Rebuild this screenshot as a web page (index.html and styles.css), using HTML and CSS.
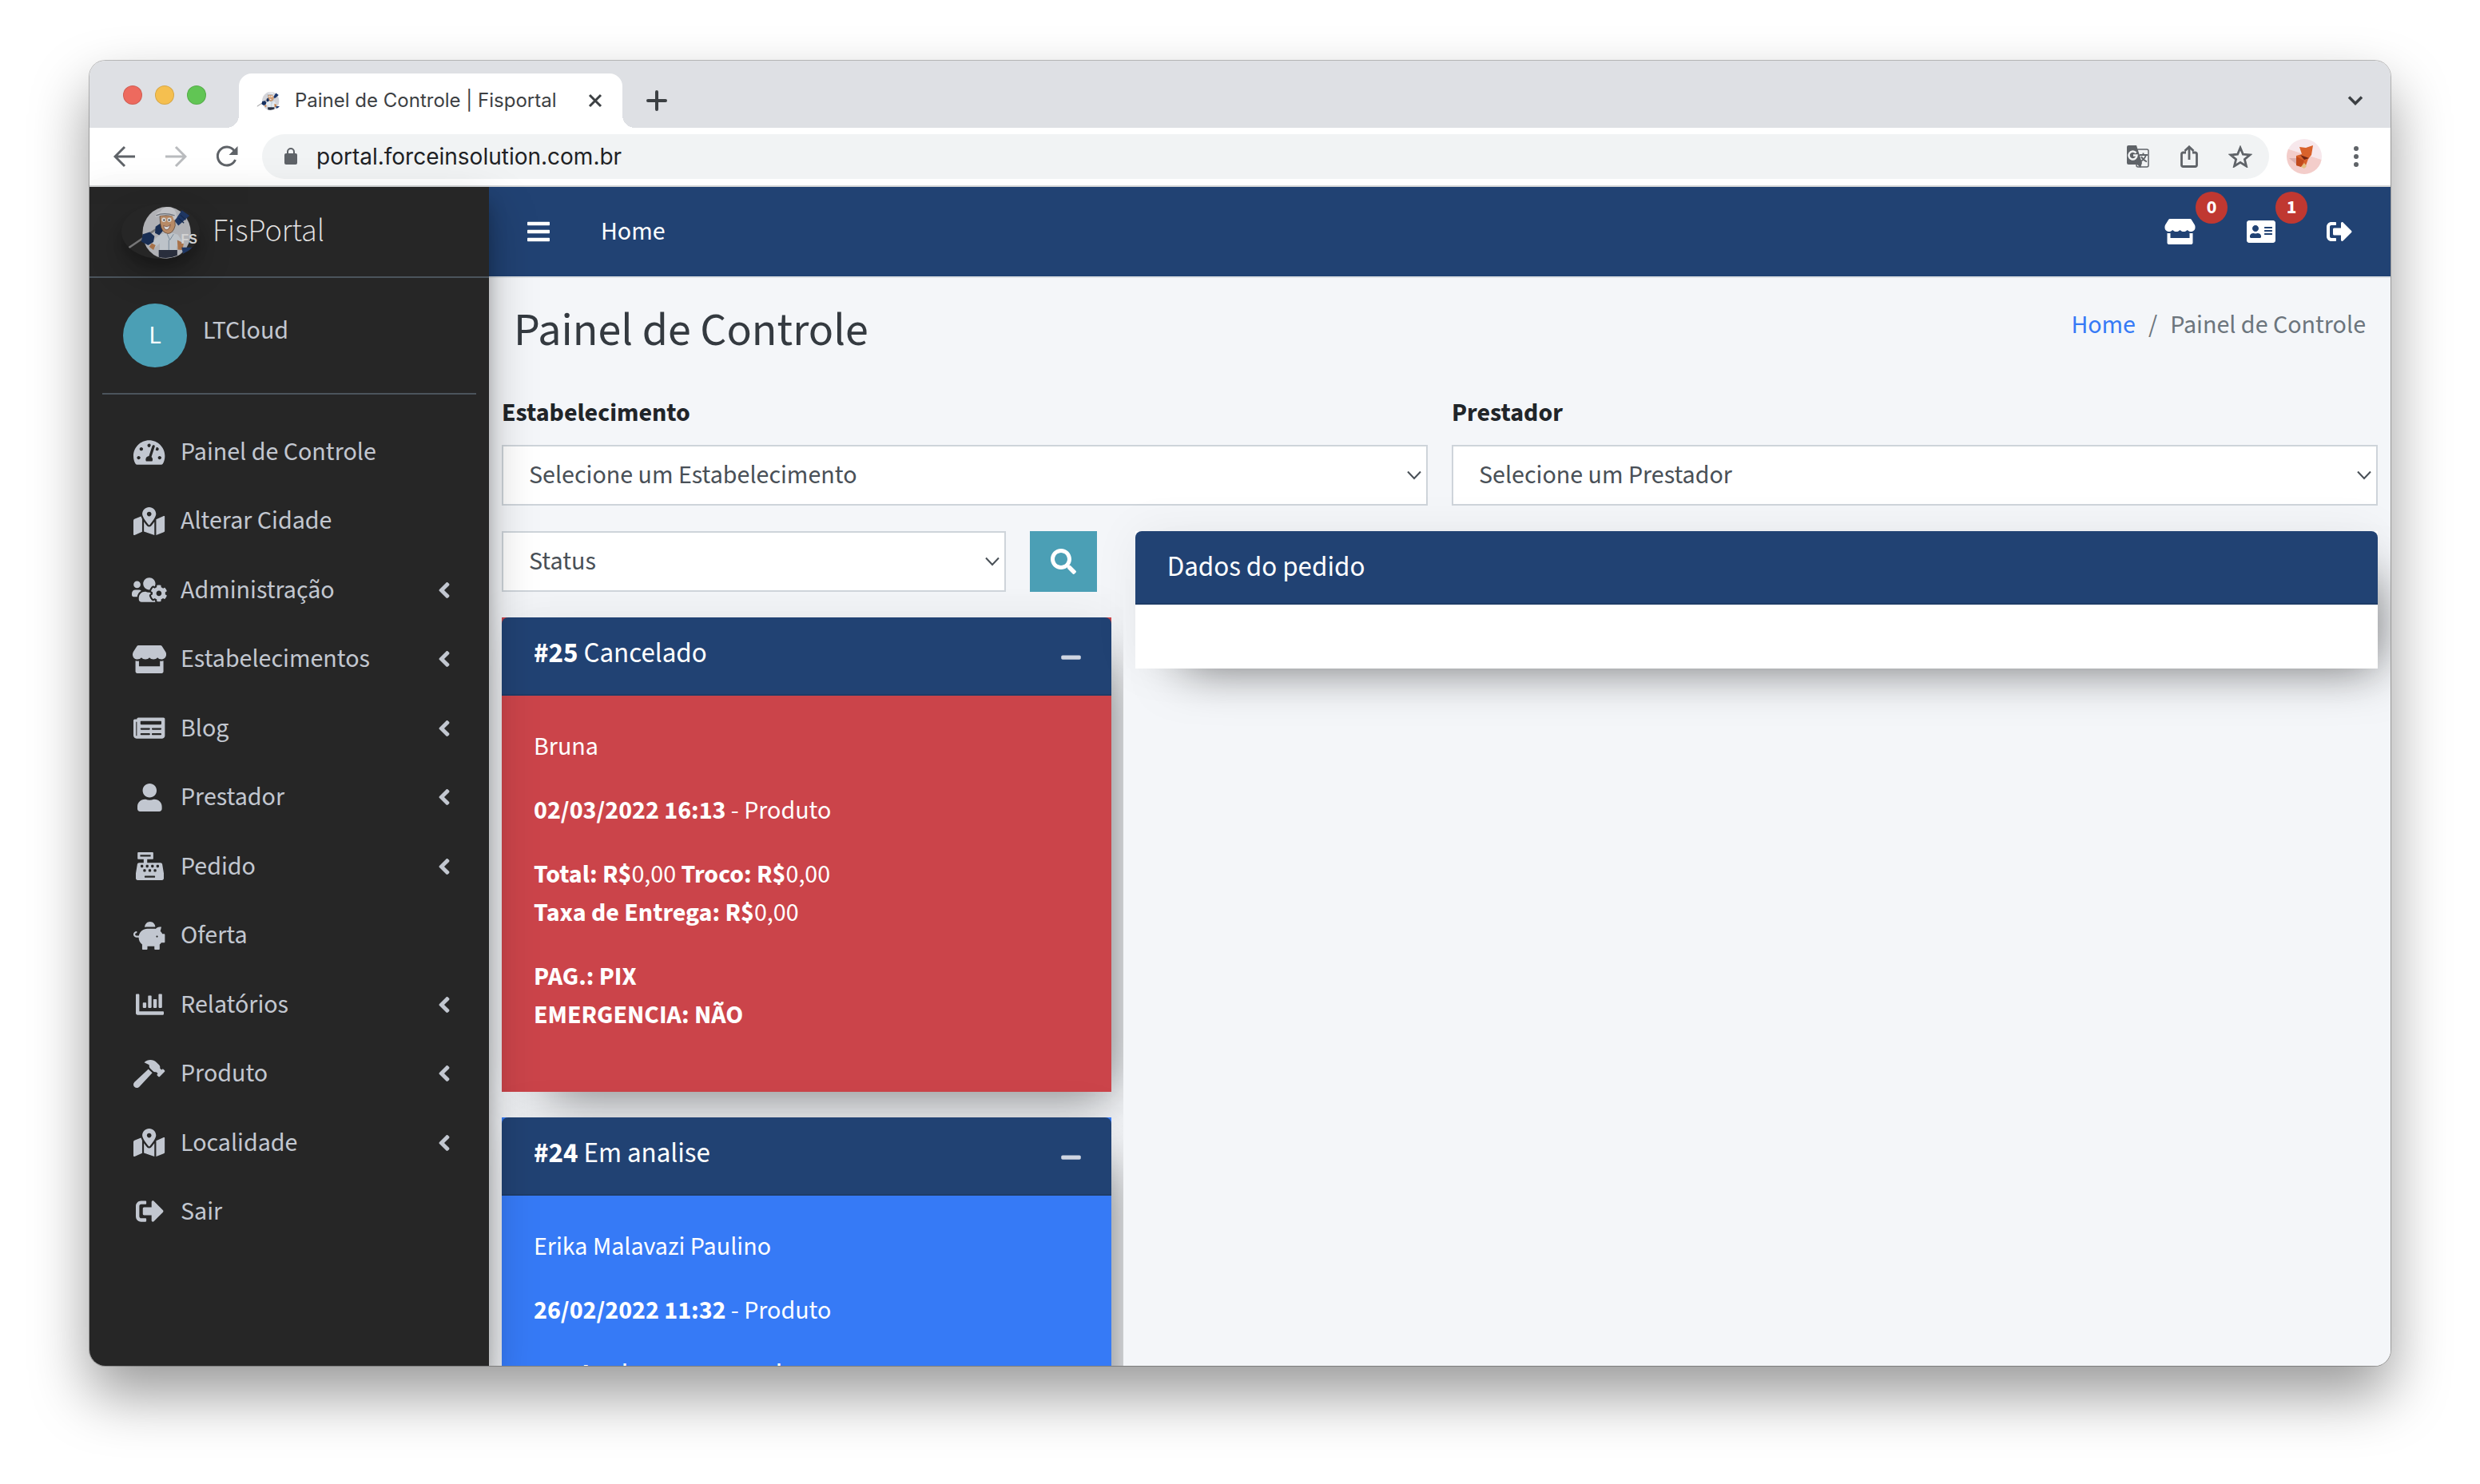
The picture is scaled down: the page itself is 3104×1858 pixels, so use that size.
FILE: index.html
```
<!DOCTYPE html>
<html lang="pt-BR">
<head>
<meta charset="utf-8">
<title>Painel de Controle | Fisportal</title>
<link rel="stylesheet" href="styles.css">
</head>
<body>
<svg class="sprite" aria-hidden="true">
  <symbol id="mascot" viewBox="0 0 290 205">
    <ellipse cx="168" cy="107" rx="91" ry="98" fill="#d3d4d9"/>
    <path d="M27 162L130 92" stroke="#8a8a8c" stroke-width="8" stroke-linecap="round"/>
    <path d="M198 62L225 22L254 42L212 80Z" fill="#1d3a72"/>
    <path d="M213 52l20 18M220 40l20 18" stroke="#122a56" stroke-width="4"/>
    <path d="M126 84l20-14 14 22-20 24-16-8z" fill="#16305f"/>
    <path d="M144 114q30-14 66 0l22 34-20 20-6-12v30h-64v-40l-20 18-12-22z" fill="#e3ebf2"/>
    <path d="M170 112l10 22 14-22M176 134v44" stroke="#8ba0b3" stroke-width="3" fill="none"/>
    <path d="M78 112l26-8 18 16-4 22-20 12-26-14z" fill="#16305f"/>
    <path d="M112 146l14 8-8 18-16-12zM208 134l24 12-4 26-18-2z" fill="#c98652"/>
    <path d="M138 172h70v20q-34 16-70 6z" fill="#2a3142"/>
    <path d="M224 162h40q-10 18-34 26z" fill="#1d3a72"/>
    <path d="M142 42h56l2 38q-8 30-28 30-24-4-28-38z" fill="#dca477" stroke="#5a3a24" stroke-width="2"/>
    <circle cx="157" cy="58" r="8" fill="#fff"/><circle cx="178" cy="58" r="8" fill="#fff"/>
    <circle cx="158" cy="59" r="3" fill="#222"/><circle cx="177" cy="59" r="3" fill="#222"/>
    <path d="M156 80q16 8 26-4-4 20-16 20-10-4-10-16z" fill="#fff" stroke="#7a3d28" stroke-width="2"/>
    <path d="M124 44q4-12 20-16 8-20 32-18 28 2 30 40l-10 10-6-16q-28-12-62 4z" fill="#e8eaee"/>
    <path d="M128 42q30-14 70 0" stroke="#80858e" stroke-width="4" fill="none"/>
  </symbol>
  <symbol id="angle" viewBox="0 0 256 512"><path d="M31.7 239l136-136c9.4-9.4 24.6-9.4 33.9 0l22.6 22.6c9.4 9.4 9.4 24.6 0 33.9L127.9 256l96.4 96.4c9.4 9.4 9.4 24.6 0 33.9L201.7 409c-9.4 9.4-24.6 9.4-33.9 0l-136-136c-9.5-9.4-9.5-24.6-.1-34z"/></symbol>
  <symbol id="map" viewBox="0 0 576 512"><path d="M288 0c-69.59 0-126 56.41-126 126 0 56.26 82.35 158.8 113.9 196.02 6.39 7.54 17.82 7.54 24.2 0C331.65 284.8 414 182.26 414 126 414 56.41 357.59 0 288 0zm0 168c-23.2 0-42-18.8-42-42s18.8-42 42-42 42 18.8 42 42-18.8 42-42 42zM20.12 215.95A32.006 32.006 0 0 0 0 245.66v250.32c0 11.32 11.43 19.06 21.94 14.86L160 448V214.92c-8.84-15.98-16.07-31.54-21.25-46.42L20.12 215.95zM288 359.67c-14.07 0-27.38-6.18-36.51-16.96-19.66-23.2-40.57-49.62-59.49-76.72v182l192 64V266c-18.92 27.09-39.82 53.52-59.49 76.72-9.13 10.77-22.44 16.95-36.51 16.95zm266.06-198.51L416 224v288l139.88-55.95A31.996 31.996 0 0 0 576 426.34V176.02c0-11.32-11.43-19.06-21.94-14.86z"/></symbol>
  <symbol id="store" viewBox="0 0 616 512"><path d="M602 118.6L537.1 15C531.3 5.7 521 0 510 0H106C95 0 84.7 5.7 78.9 15L14 118.6c-33.5 53.5-3.8 127.9 58.8 136.4 4.5.6 9.1.9 13.7.9 29.6 0 55.8-13 73.8-33.1 18 20.1 44.3 33.1 73.8 33.1 29.6 0 55.8-13 73.8-33.1 18 20.1 44.3 33.1 73.8 33.1 29.6 0 55.8-13 73.8-33.1 18.1 20.1 44.3 33.1 73.8 33.1 4.7 0 9.2-.3 13.7-.9 62.8-8.4 92.6-82.8 59-136.4zM529.5 288c-10 0-19.9-1.5-29.5-3.8V384H116v-99.8c-9.6 2.2-19.5 3.8-29.5 3.8-6 0-12.1-.4-18-1.2-5.6-.8-11.1-2.1-16.4-3.6V480c0 17.7 14.3 32 32 32h448c17.7 0 32-14.3 32-32V283.2c-5.4 1.6-10.8 2.9-16.4 3.6-6.1.8-12.1 1.2-18.2 1.2z"/></symbol>
  <symbol id="exit" viewBox="0 0 512 512"><path d="M497 273L329 441c-15 15-41 4.5-41-17v-96H152c-13.3 0-24-10.7-24-24v-96c0-13.3 10.7-24 24-24h136V88c0-21.4 25.9-32 41-17l168 168c9.3 9.4 9.3 24.6 0 34zM192 436v-40c0-6.6-5.4-12-12-12H96c-17.7 0-32-14.3-32-32V160c0-17.7 14.3-32 32-32h84c6.6 0 12-5.4 12-12V76c0-6.6-5.4-12-12-12H96c-53 0-96 43-96 96v192c0 53 43 96 96 96h84c6.6 0 12-5.4 12-12z"/></symbol>
  <symbol id="minus" viewBox="0 0 448 512"><path d="M416 208H32c-17.67 0-32 14.33-32 32v32c0 17.67 14.33 32 32 32h384c17.67 0 32-14.33 32-32v-32c0-17.67-14.33-32-32-32z"/></symbol>
  <symbol id="caret" viewBox="0 0 18 12"><path d="M1 1.5L9 10L17 1.5" fill="none" stroke="#495057" stroke-width="2"/></symbol>
</svg>

<div class="window">
  <header class="tabbar">
    <div class="lights"><span class="light close"></span><span class="light min"></span><span class="light max"></span></div>
    <div class="tab">
      <svg class="favicon" viewBox="0 0 290 205"><use href="#mascot" width="290" height="205"/></svg>
      <span class="tab-title">Painel de Controle | Fisportal</span>
      <button class="tab-close" aria-label="Fechar guia"><svg width="20" height="20" viewBox="0 0 20 20"><path d="M3 3L17 17M17 3L3 17" stroke="#3c4043" stroke-width="3"/></svg></button>
    </div>
    <button class="new-tab" aria-label="Nova guia"><svg width="26" height="26" viewBox="0 0 26 26"><path d="M13 2V24M2 13H24" stroke="#3c4043" stroke-width="4" stroke-linecap="round"/></svg></button>
    <button class="tab-search" aria-label="Pesquisar guias"><svg width="20" height="14" viewBox="0 0 20 14"><path d="M2 2.500L10 10.500L18 2.500" fill="none" stroke="#3c4043" stroke-width="3.500"/></svg></button>
  </header>

  <div class="toolbar">
    <button class="tool" aria-label="Voltar"><svg width="28" height="28" viewBox="0 0 28 28"><path d="M27 14H3M14 2L2 14L14 26" fill="none" stroke="#5f6368" stroke-width="3"/></svg></button>
    <button class="tool" aria-label="Avançar"><svg width="28" height="28" viewBox="0 0 28 28"><path d="M1 14H25M14 2L26 14L14 26" fill="none" stroke="#b9bbbe" stroke-width="3"/></svg></button>
    <button class="tool" aria-label="Recarregar"><svg width="28" height="28" viewBox="0 0 28 28"><path d="M24.500 18A11.500 11.500 0 1 1 23 6.500" fill="none" stroke="#5f6368" stroke-width="3"/><path d="M27.500 1V12H16.500Z" fill="#5f6368"/></svg></button>
    <div class="omnibox">
      <svg class="lock" width="16" height="22" viewBox="0 0 16 22"><rect x="0" y="7" width="16" height="14" rx="2" fill="#5f6368"/><path d="M4 8V5a4 4 0 0 1 8 0V8" fill="none" stroke="#5f6368" stroke-width="2"/></svg>
      <input class="url" type="text" aria-label="Endereço" value="portal.forceinsolution.com.br">
      <button class="tool" aria-label="Traduzir"><svg width="28" height="28" viewBox="0 0 28 28"><rect x="12" y="5" width="15" height="22" rx="2" fill="none" stroke="#5f6368" stroke-width="1.500"/><path d="M2 0H12L19 22L17 28L13 24H2Q0 24 0 22V2Q0 0 2 0Z" fill="#5f6368"/><path d="M11.500 9.500A5 5 0 1 0 12.500 12.500H8" fill="none" stroke="#f1f3f4" stroke-width="2.500"/><path d="M16 12H26M20.500 9.500V12M24 12Q22.500 17 17 20.500M18 14Q20 18 25 20.500" fill="none" stroke="#5f6368" stroke-width="1.800"/></svg></button>
      <button class="tool" aria-label="Compartilhar"><svg width="22" height="28" viewBox="0 0 22 28"><path d="M7 9H3.500Q1.500 9 1.500 11V24.500Q1.500 26.500 3.500 26.500H18.500Q20.500 26.500 20.500 24.500V11Q20.500 9 18.500 9H15M11 18V2M5.500 7L11 1.800L16.500 7" fill="none" stroke="#5f6368" stroke-width="2.800"/></svg></button>
      <button class="tool" aria-label="Adicionar aos favoritos"><svg width="30" height="28" viewBox="0 0 30 28"><path d="M15 3L18.400 11.200L27 11.900L20.400 17.500L22.500 26L15 21.400L7.500 26L9.600 17.500L3 11.900L11.600 11.200Z" fill="none" stroke="#5f6368" stroke-width="2.800"/></svg></button>
    </div>
    <button class="profile" aria-label="Perfil"><svg width="44" height="44" viewBox="0 0 44 44"><path d="M0 0H44V26L0 12Z" fill="#f7e8ec"/><path d="M0 12L44 26V44H0Z" fill="#f3cdca"/><path d="M3 24L14 24L16 35Z" fill="#dcb0ae"/><path d="M16 10L24 11L33 8L31 20L27 25L23 36L12 33L12 21L19 19Z" fill="#d9622b"/><path d="M17 20L28 24L22 26Z" fill="#6f2413"/><path d="M12 22L22 27L18 35L12 33Z" fill="#c24a1c"/><path d="M18 35L22 30L25 34L22 37Z" fill="#e3c083"/></svg></button>
    <button class="kebab" aria-label="Mais"><svg width="8" height="28" viewBox="0 0 8 28"><circle cx="4" cy="4" r="3" fill="#5f6368"/><circle cx="4" cy="14" r="3" fill="#5f6368"/><circle cx="4" cy="24" r="3" fill="#5f6368"/></svg></button>
  </div>

  <div class="page">
    <aside class="sidebar">
      <a class="brand" href="#"><svg class="logo" viewBox="0 0 290 205"><use href="#mascot"/><text x="222" y="148" class="mascot-text">FS</text></svg><span>FisPortal</span></a>
      <div class="user"><span class="avatar">L</span><a class="user-name" href="#">LTCloud</a></div>
      <nav class="menu">
        <a href="#"><span class="ico"><svg viewBox="0 0 576 512"><path d="M288 32C128.940 32 0 160.940 0 320c0 52.800 14.250 102.260 39.060 144.800 5.610 9.620 16.300 15.200 27.440 15.200h443c11.140 0 21.830-5.580 27.440-15.200C561.750 422.260 576 372.800 576 320c0-159.060-128.940-288-288-288zm0 64c14.710 0 26.580 10.130 30.320 23.650-1.110 2.260-2.640 4.230-3.450 6.670l-9.220 27.670c-5.130 3.490-10.970 6.010-17.640 6.010-17.670 0-32-14.330-32-32S270.330 96 288 96zM96 384c-17.670 0-32-14.330-32-32s14.330-32 32-32 32 14.330 32 32-14.330 32-32 32zm48-160c-17.670 0-32-14.330-32-32s14.330-32 32-32 32 14.330 32 32-14.330 32-32 32zm246.770-72.410l-61.330 184C343.130 347.330 352 364.540 352 384c0 11.720-3.380 22.550-8.880 32H232.880c-5.500-9.450-8.880-20.280-8.880-32 0-33.940 26.500-61.430 59.900-63.590l61.340-184.010c4.170-12.560 17.730-19.450 30.360-15.170 12.570 4.190 19.350 17.790 15.170 30.360zm14.660 57.200l15.520-46.550c3.470-1.290 7.130-2.230 11.050-2.230 17.670 0 32 14.330 32 32s-14.330 32-32 32c-11.380-.01-20.890-6.280-26.570-15.220zM480 384c-17.670 0-32-14.330-32-32s14.330-32 32-32 32 14.330 32 32-14.330 32-32 32z"/></svg></span>Painel de Controle</a>
        <a href="#"><span class="ico"><svg viewBox="0 0 576 512"><use href="#map"/></svg></span>Alterar Cidade</a>
        <a href="#"><span class="ico"><svg viewBox="0 0 640 512"><path d="M610.5 341.3c2.6-14.1 2.6-28.5 0-42.6l25.8-14.9c3-1.7 4.3-5.2 3.3-8.500-6.700-21.600-18.200-41.200-33.200-57.400-2.300-2.500-6-3.100-9-1.400l-25.800 14.900c-10.900-9.300-23.400-16.500-36.900-21.300v-29.800c0-3.400-2.400-6.400-5.700-7.100-22.300-5-45-4.800-66.200 0-3.300.7-5.700 3.700-5.700 7.100v29.800c-13.500 4.800-26 12-36.900 21.300l-25.800-14.900c-2.900-1.700-6.700-1.100-9 1.400-15 16.200-26.500 35.800-33.200 57.400-1 3.300.4 6.800 3.300 8.500l25.800 14.900c-2.600 14.100-2.600 28.500 0 42.600l-25.800 14.900c-3 1.700-4.300 5.200-3.300 8.500 6.700 21.600 18.200 41.100 33.200 57.400 2.300 2.500 6 3.100 9 1.400l25.800-14.900c10.900 9.300 23.400 16.500 36.900 21.300v29.800c0 3.400 2.400 6.400 5.700 7.100 22.300 5 45 4.800 66.200 0 3.300-.7 5.700-3.700 5.700-7.100v-29.800c13.500-4.800 26-12 36.900-21.300l25.800 14.900c2.900 1.700 6.700 1.100 9-1.400 15-16.200 26.500-35.800 33.200-57.400 1-3.300-.4-6.800-3.300-8.500l-25.800-14.900zM496 368.500c-26.800 0-48.500-21.800-48.500-48.500s21.800-48.500 48.500-48.500 48.500 21.800 48.500 48.500-21.700 48.500-48.500 48.500zM96 224c35.300 0 64-28.700 64-64s-28.700-64-64-64-64 28.700-64 64 28.700 64 64 64zm224 32c1.900 0 3.700-.5 5.600-.6 8.300-21.700 20.500-42.100 36.300-59.200 7.400-8 17.900-12.600 28.900-12.600 6.900 0 13.700 1.800 19.600 5.300l7.900 4.600c.8-.5 1.600-.9 2.400-1.400 7-14.600 11.200-30.800 11.200-48 0-61.900-50.100-112-112-112S208 82.100 208 144c0 61.900 50.100 112 112 112zm105.200 194.500c-2.300-1.200-4.600-2.600-6.800-3.900-8.200 4.800-15.300 9.800-27.500 9.800-10.900 0-21.400-4.600-28.900-12.600-18.300-19.800-32.300-43.900-40.200-69.600-10.700-34.500 24.900-49.700 25.800-50.300-.1-2.600-.1-5.200 0-7.800l-7.900-4.600c-3.800-2.200-7-5-9.800-8.100-3.300.2-6.500.6-9.800.6-24.600 0-47.600-6-68.500-16h-8.300C179.600 288 128 339.600 128 403.200V432c0 26.500 21.500 48 48 48h255.400c-3.700-6-6.200-12.800-6.200-20.300v-9.200zM173.100 274.600C161.500 263.100 145.600 256 128 256H64c-35.300 0-64 28.700-64 64v32c0 17.700 14.300 32 32 32h65.900c6.300-47.400 34.900-87.300 75.200-109.400z"/></svg></span>Administração<svg class="angle"><use href="#angle"/></svg></a>
        <a href="#"><span class="ico"><svg viewBox="0 0 616 512"><use href="#store"/></svg></span>Estabelecimentos<svg class="angle"><use href="#angle"/></svg></a>
        <a href="#"><span class="ico"><svg viewBox="0 0 576 512"><path d="M552 64H88c-13.255 0-24 10.745-24 24v8H24c-13.255 0-24 10.745-24 24v272c0 30.928 25.072 56 56 56h472c26.510 0 48-21.490 48-48V88c0-13.255-10.745-24-24-24zM56 400a8 8 0 0 1-8-8V144h16v248a8 8 0 0 1-8 8zm236-16H140c-6.627 0-12-5.373-12-12v-8c0-6.627 5.373-12 12-12h152c6.627 0 12 5.373 12 12v8c0 6.627-5.373 12-12 12zm208 0H348c-6.627 0-12-5.373-12-12v-8c0-6.627 5.373-12 12-12h152c6.627 0 12 5.373 12 12v8c0 6.627-5.373 12-12 12zm-208-96H140c-6.627 0-12-5.373-12-12v-8c0-6.627 5.373-12 12-12h152c6.627 0 12 5.373 12 12v8c0 6.627-5.373 12-12 12zm208 0H348c-6.627 0-12-5.373-12-12v-8c0-6.627 5.373-12 12-12h152c6.627 0 12 5.373 12 12v8c0 6.627-5.373 12-12 12zm0-96H140c-6.627 0-12-5.373-12-12v-40c0-6.627 5.373-12 12-12h360c6.627 0 12 5.373 12 12v40c0 6.627-5.373 12-12 12z"/></svg></span>Blog<svg class="angle"><use href="#angle"/></svg></a>
        <a href="#"><span class="ico"><svg viewBox="0 0 448 512"><path d="M224 256c70.700 0 128-57.300 128-128S294.700 0 224 0 96 57.300 96 128s57.300 128 128 128zm89.600 32h-16.700c-22.200 10.200-46.900 16-72.900 16s-50.600-5.800-72.900-16h-16.700C60.200 288 0 348.200 0 422.400V464c0 26.500 21.500 48 48 48h352c26.500 0 48-21.500 48-48v-41.600c0-74.200-60.200-134.400-134.400-134.400z"/></svg></span>Prestador<svg class="angle"><use href="#angle"/></svg></a>
        <a href="#"><span class="ico"><svg viewBox="0 0 512 512"><path d="M511.100 378.800l-26.700-160c-2.600-15.400-15.900-26.700-31.600-26.700H208v-64h96c8.800 0 16-7.200 16-16V16c0-8.800-7.200-16-16-16H48c-8.800 0-16 7.200-16 16v96c0 8.800 7.200 16 16 16h96v64H59.100c-15.600 0-29 11.300-31.600 26.700L.8 378.700c-.6 3.500-.9 7-.9 10.500V480c0 17.700 14.300 32 32 32h448c17.700 0 32-14.300 32-32v-90.700c.1-3.500-.2-7-.8-10.500zM280 248c0-8.800 7.200-16 16-16h16c8.800 0 16 7.200 16 16v16c0 8.800-7.200 16-16 16h-16c-8.800 0-16-7.200-16-16v-16zm-32 64h16c8.800 0 16 7.200 16 16v16c0 8.800-7.200 16-16 16h-16c-8.800 0-16-7.200-16-16v-16c0-8.800 7.200-16 16-16zm-32-80c8.800 0 16 7.200 16 16v16c0 8.800-7.200 16-16 16h-16c-8.800 0-16-7.200-16-16v-16c0-8.800 7.200-16 16-16h16zM80 80V48h192v32H80zm40 200h-16c-8.800 0-16-7.200-16-16v-16c0-8.800 7.200-16 16-16h16c8.800 0 16 7.200 16 16v16c0 8.800-7.200 16-16 16zm16 64v-16c0-8.800 7.200-16 16-16h16c8.800 0 16 7.200 16 16v16c0 8.800-7.200 16-16 16h-16c-8.800 0-16-7.200-16-16zm216 112c0 4.400-3.600 8-8 8H168c-4.400 0-8-3.600-8-8v-16c0-4.400 3.600-8 8-8h176c4.400 0 8 3.600 8 8v16zm24-112c0 8.800-7.200 16-16 16h-16c-8.800 0-16-7.200-16-16v-16c0-8.800 7.200-16 16-16h16c8.800 0 16 7.200 16 16v16zm48-80c0 8.800-7.200 16-16 16h-16c-8.800 0-16-7.200-16-16v-16c0-8.800 7.200-16 16-16h16c8.800 0 16 7.200 16 16v16z"/></svg></span>Pedido<svg class="angle"><use href="#angle"/></svg></a>
        <a href="#"><span class="ico"><svg viewBox="0 0 576 512"><path d="M560 224h-29.500c-8.800-20-21.600-37.700-37.400-52.500L512 96h-32c-29.400 0-55.400 13.500-73 34.300-7.600-1.100-15.100-2.300-23-2.300H256c-77.400 0-141.900 55-156.800 128H56c-14.800 0-26.500-13.500-23.500-28.800C34.700 215.800 45.400 208 57 208h1c3.300 0 6-2.700 6-6v-20c0-3.300-2.700-6-6-6-28.500 0-53.900 20.400-57.500 48.600C-3.900 258.800 22.700 288 56 288h40c0 52.200 25.400 98.100 64 127.300V496c0 8.800 7.200 16 16 16h64c8.800 0 16-7.200 16-16v-48h128v48c0 8.800 7.200 16 16 16h64c8.800 0 16-7.200 16-16v-80.700c11.800-8.900 22.300-19.400 31.300-31.300H560c8.800 0 16-7.200 16-16V240c0-8.800-7.200-16-16-16zm-128 64c-8.800 0-16-7.200-16-16s7.200-16 16-16 16 7.200 16 16-7.200 16-16 16zM256 96h128c5.400 0 10.700.4 15.900.8 0-.3.1-.5.1-.8 0-53-43-96-96-96s-96 43-96 96c0 2.100.5 4.100.6 6.200 15.200-3.900 31-6.200 47.400-6.200z"/></svg></span>Oferta</a>
        <a href="#"><span class="ico"><svg viewBox="0 0 512 512"><path d="M332.800 320h38.400c6.400 0 12.800-6.400 12.800-12.800V172.800c0-6.400-6.400-12.800-12.800-12.800h-38.400c-6.400 0-12.800 6.400-12.800 12.800v134.400c0 6.400 6.400 12.800 12.800 12.800zm96 0h38.400c6.400 0 12.800-6.400 12.800-12.800V76.800c0-6.400-6.400-12.800-12.800-12.800h-38.400c-6.400 0-12.800 6.400-12.800 12.800v230.400c0 6.400 6.400 12.800 12.800 12.800zm-288 0h38.400c6.400 0 12.800-6.400 12.800-12.800v-70.400c0-6.400-6.400-12.800-12.800-12.800h-38.400c-6.400 0-12.800 6.400-12.800 12.800v70.400c0 6.400 6.400 12.800 12.800 12.800zm96 0h38.400c6.400 0 12.800-6.400 12.800-12.800V108.800c0-6.400-6.400-12.800-12.800-12.800h-38.400c-6.400 0-12.800 6.400-12.800 12.800v198.400c0 6.400 6.400 12.800 12.800 12.800zM496 384H64V80c0-8.840-7.160-16-16-16H16C7.160 64 0 71.160 0 80v336c0 17.670 14.330 32 32 32h464c8.840 0 16-7.160 16-16v-32c0-8.840-7.160-16-16-16z"/></svg></span>Relatórios<svg class="angle"><use href="#angle"/></svg></a>
        <a href="#"><span class="ico"><svg viewBox="0 0 576 512"><path d="M571.310 193.940l-22.630-22.630c-6.250-6.250-16.380-6.250-22.630 0l-11.310 11.310-28.900-28.900c5.630-21.310.36-44.900-16.350-61.610l-45.250-45.250c-62.480-62.480-163.790-62.480-226.280 0l90.510 45.250v18.750c0 16.970 6.740 33.250 18.750 45.250l49.140 49.140c16.710 16.710 40.300 21.980 61.610 16.350l28.900 28.900-11.310 11.310c-6.250 6.250-6.250 16.380 0 22.630l22.630 22.630c6.250 6.250 16.380 6.250 22.630 0l90.510-90.510c6.230-6.240 6.230-16.370-.02-22.620zm-286.720-15.200c-3.700-3.700-6.840-7.790-9.850-11.950L19.640 404.960c-25.570 23.880-26.260 64.190-1.530 88.930s65.050 24.050 88.920-1.530l238.130-255.070c-3.960-2.910-7.900-5.870-11.440-9.410l-49.130-49.140z"/></svg></span>Produto<svg class="angle"><use href="#angle"/></svg></a>
        <a href="#"><span class="ico"><svg viewBox="0 0 576 512"><use href="#map"/></svg></span>Localidade<svg class="angle"><use href="#angle"/></svg></a>
        <a href="#"><span class="ico"><svg viewBox="0 0 512 512"><use href="#exit"/></svg></span>Sair</a>
      </nav>
    </aside>

    <div class="main">
      <nav class="navbar">
        <button class="bars" aria-label="Menu"><svg width="28" height="32" viewBox="0 0 448 512"><path d="M16 132h416c8.837 0 16-7.163 16-16V76c0-8.837-7.163-16-16-16H16C7.163 60 0 67.163 0 76v40c0 8.837 7.163 16 16 16zm0 160h416c8.837 0 16-7.163 16-16v-40c0-8.837-7.163-16-16-16H16c-8.837 0-16 7.163-16 16v40c0 8.837 7.163 16 16 16zm0 160h416c8.837 0 16-7.163 16-16v-40c0-8.837-7.163-16-16-16H16c-8.837 0-16 7.163-16 16v40c0 8.837 7.163 16 16 16z"/></svg></button>
        <a class="nav-home" href="#">Home</a>
        <div class="nav-right">
          <a href="#" aria-label="Estabelecimentos"><svg width="39" height="32" viewBox="0 0 616 512"><use href="#store"/></svg><span class="badge">0</span></a>
          <a href="#" aria-label="Prestadores"><svg width="36" height="32" viewBox="0 0 576 512"><path d="M528 32H48C21.500 32 0 53.500 0 80v352c0 26.500 21.500 48 48 48h480c26.500 0 48-21.500 48-48V80c0-26.500-21.500-48-48-48zm-352 96c35.300 0 64 28.700 64 64s-28.700 64-64 64-64-28.700-64-64 28.700-64 64-64zm112 236.800c0 10.600-10 19.200-22.400 19.200H86.400C74 384 64 375.400 64 364.800v-19.200c0-31.800 30.100-57.600 67.200-57.600h5c12.300 5.100 25.700 8 39.800 8s27.600-2.900 39.800-8h5c37.100 0 67.200 25.800 67.200 57.600v19.200zM512 312c0 4.400-3.600 8-8 8H360c-4.400 0-8-3.600-8-8v-16c0-4.400 3.600-8 8-8h144c4.400 0 8 3.600 8 8v16zm0-64c0 4.400-3.600 8-8 8H360c-4.400 0-8-3.600-8-8v-16c0-4.400 3.600-8 8-8h144c4.400 0 8 3.600 8 8v16zm0-64c0 4.400-3.600 8-8 8H360c-4.400 0-8-3.600-8-8v-16c0-4.400 3.600-8 8-8h144c4.400 0 8 3.600 8 8v16z"/></svg><span class="badge">1</span></a>
          <a href="#" aria-label="Sair"><svg width="32" height="32" viewBox="0 0 512 512"><use href="#exit"/></svg></a>
        </div>
      </nav>

      <main class="content">
        <div class="content-header">
          <h1>Painel de Controle</h1>
          <nav class="crumbs"><a href="#">Home</a><span>/</span><span>Painel de Controle</span></nav>
        </div>

        <div class="filters">
          <div class="field">
            <label for="est">Estabelecimento</label>
            <div class="select"><select id="est"><option>Selecione um Estabelecimento</option></select><svg><use href="#caret"/></svg></div>
          </div>
          <div class="field">
            <label for="pre">Prestador</label>
            <div class="select"><select id="pre"><option>Selecione um Prestador</option></select><svg><use href="#caret"/></svg></div>
          </div>
        </div>

        <div class="row">
          <section class="orders">
            <form class="search">
              <div class="select"><select aria-label="Status"><option>Status</option></select><svg><use href="#caret"/></svg></div>
              <button class="search-btn" type="button" aria-label="Buscar"><svg width="32" height="32" viewBox="0 0 512 512"><path d="M505 442.700L405.300 343c-4.500-4.500-10.600-7-17-7H372c27.600-35.300 44-79.700 44-128C416 93.100 322.900 0 208 0S0 93.100 0 208s93.100 208 208 208c48.300 0 92.700-16.400 128-44v16.300c0 6.400 2.500 12.500 7 17l99.700 99.700c9.400 9.400 24.600 9.400 33.900 0l28.300-28.300c9.400-9.400 9.400-24.600.1-34zM208 336c-70.700 0-128-57.200-128-128 0-70.700 57.200-128 128-128 70.700 0 128 57.200 128 128 0 70.700-57.200 128-128 128z"/></svg></button>
            </form>
            <article class="card canceled">
              <header class="card-header"><h3><b>#25</b> Cancelado</h3><button class="collapse" aria-label="Recolher"><svg width="25" height="28"><use href="#minus"/></svg></button></header>
              <div class="card-body">
                <p>Bruna</p>
                <p><b>02/03/2022 16:13</b> - Produto</p>
                <p><b>Total: R$</b>0,00 <b>Troco: R$</b>0,00<br><b>Taxa de Entrega: R$</b>0,00</p>
                <p><b>PAG.: PIX<br>EMERGENCIA: NÃO</b></p>
              </div>
            </article>
            <article class="card analysis">
              <header class="card-header"><h3><b>#24</b> Em analise</h3><button class="collapse" aria-label="Recolher"><svg width="25" height="28"><use href="#minus"/></svg></button></header>
              <div class="card-body">
                <p>Erika Malavazi Paulino</p>
                <p><b>26/02/2022 11:32</b> - Produto</p>
                <p><b>Total: R$</b>0,00 <b>Troco: R$</b>0,00</p>
              </div>
            </article>
          </section>
          <section class="details">
            <article class="card">
              <header class="card-header"><h3>Dados do pedido</h3></header>
              <div class="card-body"></div>
            </article>
          </section>
        </div>
      </main>
    </div>
  </div>
</div>
</body>
</html>
```
FILE: styles.css
```
* { box-sizing: border-box; }
body {
  margin: 0;
  padding: 76px 112px 148px;
  background: #fff;
  font-family: "Source Sans Pro", "Source Sans 3", "Noto Sans CJK SC", sans-serif;
  font-size: 32px;
  line-height: 48px;
  color: #212529;
}
a { color: inherit; text-decoration: none; }
button { border: 0; padding: 0; background: none; font: inherit; display: flex; align-items: center; justify-content: center; }
svg { display: block; fill: currentColor; }
b { font-weight: 700; }
.sprite { position: absolute; width: 0; height: 0; }
.mascot-text { font: 700 48px "Liberation Sans", sans-serif; fill: #fff; }

/* Browser window */
.window {
  height: calc(100vh - 224px);
  display: flex;
  flex-direction: column;
  overflow: hidden;
  border-radius: 20px;
  background: #fff;
  box-shadow: 0 0 0 1px rgba(0, 0, 0, .25), 0 36px 72px rgba(0, 0, 0, .4);
}
.tabbar { flex: none; height: 84px; display: flex; align-items: stretch; background: #dee0e4; padding: 16px 32px 0 42px; }
.lights { display: flex; gap: 16px; padding-top: 15px; margin-right: 41px; }
.light { width: 24px; height: 24px; border-radius: 50%; border: 1px solid rgba(0, 0, 0, .12); }
.close { background: #ed6a5e; }
.min { background: #f5bf4f; }
.max { background: #61c554; }
.tab { position: relative; width: 480px; display: flex; align-items: center; padding: 0 24px 0 20px; background: #fff; border-radius: 16px 16px 0 0; }
.tab::before, .tab::after { content: ""; position: absolute; bottom: 0; width: 16px; height: 16px; }
.tab::before { right: 100%; background: radial-gradient(circle at 0 0, #dee0e4 16px, #fff 16px); }
.tab::after { left: 100%; background: radial-gradient(circle at 100% 0, #dee0e4 16px, #fff 16px); }
.favicon { width: 34px; height: 24px; margin-right: 16px; }
.tab-title { flex: 1; font-family: Inter, sans-serif; font-size: 24px; line-height: 32px; color: #3c4043; white-space: nowrap; }
.new-tab { width: 86px; }
.tab-search { width: 24px; margin-left: auto; }
.toolbar { flex: none; height: 74px; display: flex; align-items: center; padding-left: 12px; border-bottom: 2px solid #d6d8d9; }
.tool { width: 64px; height: 56px; }
.omnibox { flex: 1; height: 56px; margin-left: 12px; padding: 0 4px 0 28px; display: flex; align-items: center; border-radius: 28px; background: #f1f3f4; }
.url { flex: 1; border: 0; padding: 0; margin-left: 24px; background: none; outline: 0; font: 28px/40px Inter, sans-serif; color: #202124; }
.profile { margin-left: 22px; border-radius: 50%; overflow: hidden; }
.kebab { width: 86px; height: 56px; }

/* Sidebar */
.page { flex: 1; min-height: 0; display: flex; }
.sidebar { flex: none; width: 500px; z-index: 2; background: #262626; color: #c2c7d0; box-shadow: 0 28px 56px rgba(0, 0, 0, .25), 0 20px 20px rgba(0, 0, 0, .22); }
.brand { height: 114px; display: flex; align-items: center; gap: 16px; padding: 0 0 0 40px; border-bottom: 2px solid #4b545c; font-size: 40px; font-weight: 300; color: #e4e4e4; }
.logo { width: 98px; height: 68px; border-radius: 50%; opacity: .8; box-shadow: 0 20px 40px rgba(0, 0, 0, .25), 0 12px 12px rgba(0, 0, 0, .22); }
.user { display: flex; align-items: flex-start; gap: 20px; margin: 32px 16px; padding: 0 26px 32px; border-bottom: 2px solid #4b545c; }
.avatar { width: 80px; height: 80px; border-radius: 50%; background: #4b9fb5; color: #fff; text-align: center; line-height: 80px; }
.user-name { margin-top: 10px; }
.menu { height: 1031px; display: flex; flex-direction: column; justify-content: space-between; padding: 0 16px; }
.menu a { height: 80px; display: flex; align-items: center; padding: 0 32px; }
.ico { width: 54px; margin-right: 12px; display: flex; justify-content: center; }
.ico svg { height: 35px; overflow: visible; }
.angle { width: 16px; height: 32px; margin-left: auto; }

/* Top bar */
.main { flex: 1; min-width: 0; overflow: hidden; background: #f4f6f9; }
.navbar { height: 114px; display: flex; align-items: center; padding: 0 48px; border-bottom: 2px solid #dee2e6; background: #214273; color: #fff; }
.bars, .search-btn { color: #fff; }
.nav-home { margin-left: 64px; }
.nav-right { margin-left: auto; display: flex; gap: 64px; }
.nav-right a { position: relative; }
.badge { position: absolute; left: 100%; bottom: 26px; width: 40px; height: 40px; border-radius: 50%; background: #c03831; font-size: 24px; font-weight: 700; line-height: 40px; text-align: center; }

/* Content */
.content { padding: 0 16px; }
.content-header { height: 145px; display: flex; justify-content: space-between; padding: 31px 15px 0 15px; }
h1 { margin: 0; font-size: 58px; font-weight: 400; line-height: 70px; color: #343a40; }
.crumbs { display: flex; gap: 16px; margin-top: 4px; color: #6c757d; }
.crumbs a { color: #367af6; }
.filters { display: grid; grid-template-columns: 1fr 1fr; gap: 30px; margin-bottom: 32px; }
.field label { display: block; margin-bottom: 16px; font-weight: 700; }
.select { display: grid; align-items: center; }
.select > * { grid-area: 1 / 1; }
.select select { appearance: none; width: 100%; height: 76px; padding: 0 32px; border: 2px solid #ced4da; border-radius: 0; background: #fff; color: #495057; font: inherit; }
.select svg { justify-self: end; width: 18px; height: 12px; margin-right: 8px; pointer-events: none; }
.row { display: flex; margin: 0 -15px; }
.orders { flex: none; width: 33.3333%; padding: 0 15px; overflow: hidden; }
.details { flex: 1; padding: 0 15px; }
.search { display: flex; gap: 30px; margin-bottom: 32px; }
.search .select { width: calc((100% + 30px) * 10 / 12 - 30px); }
.search-btn { width: 84px; height: 76px; background: #4b9fb5; }
.card { margin-bottom: 32px; background: #fff; box-shadow: 30px 30px 60px -30px rgba(0, 0, 0, .5), 0 0 60px rgba(0, 0, 0, .06); }
.card-header { display: flex; justify-content: space-between; padding: 24px 38px 24px 40px; border-bottom: 2px solid #1e3c67; border-radius: 8px 8px 0 0; background: #214273; color: #fff; }
h3 { margin: 0; font-size: 35px; font-weight: 400; line-height: 42px; }
.collapse { height: 48px; padding-top: 4px; color: #d0d6e2; }
.card-body { padding: 40px; }
.card-body p { margin: 0 0 32px; }
.canceled { background: #cb444a; color: #fff; }
.analysis { background: #367af6; color: #fff; }
```
